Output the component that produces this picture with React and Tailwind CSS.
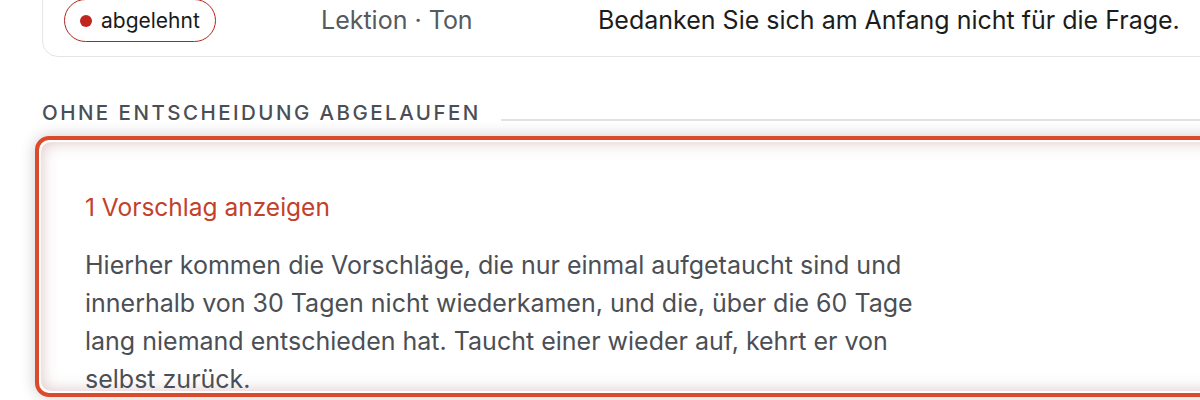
export default function App() {
  const font = { fontFamily: 'Inter, "Noto Sans", sans-serif' };
  return (
    <div className="w-[1200px] h-[400px] overflow-hidden bg-white" style={font}>
      <div className="w-[1260px] pl-[42px]">
        {/* top card (cut off at top) */}
        <div className="-mt-[24px] border border-[#e5e5e5] rounded-b-[16px] pt-[22px] pb-[14px] pl-[21px]">
          <div className="grid grid-cols-[257px_277px_1fr] items-center">
            <div>
              <span className="inline-flex items-center gap-[9px] h-[43px] pl-[15px] pr-[15px] rounded-full border-[1.5px] border-[#b3261e] text-[21px] text-[#1a1a1a]">
                <span className="w-[12px] h-[12px] rounded-full bg-[#c0261e]" />
                abgelehnt
              </span>
            </div>
            <div className="text-[25px] text-[#555a60]">Lektion · Ton</div>
            <div className="text-[25px] text-[#1c1c1c] whitespace-nowrap">Bedanken Sie sich am Anfang nicht für die Frage.</div>
          </div>
        </div>

        {/* section heading */}
        <div className="mt-[42px] flex items-end gap-[20px]">
          <h2 className="text-[20.5px] leading-[28px] tracking-[0.12em] font-medium text-[#4a4f55] uppercase whitespace-nowrap">
            Ohne Entscheidung abgelaufen
          </h2>
          <div className="flex-1 h-[2px] bg-[#e2e2e2] mb-[6px]" />
        </div>

        {/* focused box */}
        <div className="-ml-[7px] mt-[9px] h-[261px] rounded-[14px] border-[4px] border-[#dc4a2c] p-[2px] shadow-[0_0_16px_rgba(0,0,0,0.2)]">
          <div className="h-full overflow-hidden rounded-[10px] bg-white shadow-[inset_0_0_16px_rgba(150,70,70,0.32)] pl-[44px] pt-[50px]">
            <div className="text-[24.5px] leading-[30px] text-[#c2412b]">1 Vorschlag anzeigen</div>
            <p className="mt-[24px] w-[840px] text-[25px] leading-[38px] text-[#4b4f55]">
              Hierher kommen die Vorschläge, die nur einmal aufgetaucht sind und innerhalb von 30 Tagen nicht wiederkamen, und die, über die 60 Tage lang niemand entschieden hat. Taucht einer wieder auf, kehrt er von selbst zurück.
            </p>
          </div>
        </div>
      </div>
    </div>
  );
}
